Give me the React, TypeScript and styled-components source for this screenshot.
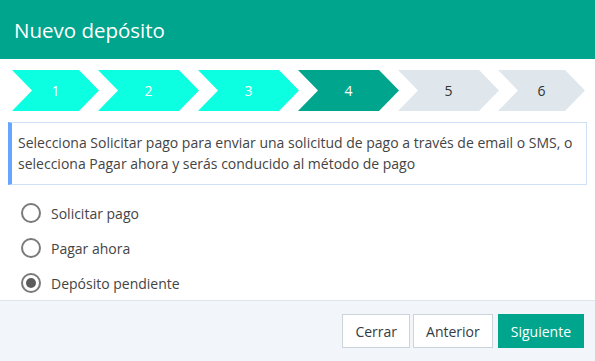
import React, { useState } from 'react';
import styled, { createGlobalStyle } from 'styled-components';

const GlobalStyle = createGlobalStyle`
    html, body {
        margin: 0;
        padding: 0;
        background: #ffffff;
    }
    body {
        font-family: 'Open Sans', 'Noto Sans', sans-serif;
        color: #444;
    }
    * {
        box-sizing: border-box;
    }
`;

const ModalBox = styled.div`
    width: 595px;
    height: 361px;
    display: flex;
    flex-direction: column;
    background: #fff;
`;

const ModalHeader = styled.div`
    height: 59px;
    background-color: #00a58e;
    display: flex;
    align-items: center;
    padding-left: 14px;

    h1 {
        margin: 0;
        font-size: 20.5px;
        font-weight: 400;
        color: #ffffff;
    }
`;

const ModalBody = styled.div`
    flex: 1;
    padding: 11px 8px 0 8px;
`;

const StepsRow = styled.div`
    display: flex;
    padding-left: 4px;
    height: 41px;
`;

type StepState = 'done' | 'active' | 'pending';

const StepItem = styled.div<{ $state: StepState; $w: number }>`
    width: ${p => p.$w}px;
    height: 41px;
    margin-left: -1px;
    display: flex;
    align-items: center;
    justify-content: center;
    font-size: 14px;
    clip-path: polygon(0 0, calc(100% - 20px) 0, 100% 50%, calc(100% - 20px) 100%, 0 100%, 20px 50%);
    background-color: ${p => (p.$state === 'done' ? '#0dffe1' : p.$state === 'active' ? '#00a58e' : '#dfe7ec')};
    color: ${p => (p.$state === 'pending' ? '#333' : '#fff')};

    &:first-child {
        margin-left: 0;
    }
`;

const InfoBox = styled.div`
    margin-top: 11px;
    width: 579px;
    border: 1px solid #cfe1f7;
    border-left: 4px solid #66a6ff;
    padding: 9px 10px 10px 6px;
    font-size: 14px;
    line-height: 21px;
    color: #444;
`;

const RadioList = styled.div`
    display: flex;
    flex-direction: column;
    padding: 18px 0 0 13px;
    gap: 15px;
`;

const RadioRow = styled.label`
    display: flex;
    align-items: center;
    gap: 10px;
    height: 20px;
    font-size: 14px;
    color: #444;
    cursor: pointer;
`;

const RadioCircle = styled.span<{ $checked: boolean }>`
    width: 20px;
    height: 20px;
    border-radius: 50%;
    border: 2px solid #7a7a7a;
    display: flex;
    align-items: center;
    justify-content: center;

    &::after {
        content: '';
        width: 10px;
        height: 10px;
        border-radius: 50%;
        background: ${p => (p.$checked ? '#5c5c5c' : 'transparent')};
    }
`;

const ModalFooter = styled.div`
    height: 61px;
    border-top: 1px solid #dde4ea;
    background-color: #f2f6fa;
    display: flex;
    justify-content: flex-end;
    align-items: center;
    gap: 3px;
    padding: 0 11px 0 0;
`;

const FooterButton = styled.button<{ $primary?: boolean }>`
    height: 34px;
    padding: 0 ${p => (p.$primary ? '12px' : '12px')};
    font-family: 'Open Sans', 'Noto Sans', sans-serif;
    font-size: 14px;
    border: 1px solid ${p => (p.$primary ? '#00a58e' : '#cbd3dc')};
    background-color: ${p => (p.$primary ? '#00a58e' : '#ffffff')};
    color: ${p => (p.$primary ? '#ffffff' : '#333a44')};
    border-radius: 0;
    cursor: pointer;
    margin-left: ${p => (p.$primary ? '2px' : '0')};
`;

const steps: { n: number; state: StepState; w: number }[] = [
    { n: 1, state: 'done', w: 87 },
    { n: 2, state: 'done', w: 101 },
    { n: 3, state: 'done', w: 101 },
    { n: 4, state: 'active', w: 101 },
    { n: 5, state: 'pending', w: 101 },
    { n: 6, state: 'pending', w: 87 },
];

const options = ['Solicitar pago', 'Pagar ahora', 'Depósito pendiente'];

const App = () => {
    const [selected, setSelected] = useState('Depósito pendiente');

    return (
        <>
            <GlobalStyle />
            <ModalBox>
                <ModalHeader>
                    <h1>Nuevo depósito</h1>
                </ModalHeader>
                <ModalBody>
                    <StepsRow>
                        {steps.map(s => (
                            <StepItem key={s.n} $state={s.state} $w={s.w}>
                                {s.n}
                            </StepItem>
                        ))}
                    </StepsRow>
                    <InfoBox>
                        Selecciona Solicitar pago para enviar una solicitud de pago a través de email o SMS, o selecciona Pagar ahora y serás
                        conducido al método de pago
                    </InfoBox>
                    <RadioList>
                        {options.map(o => (
                            <RadioRow key={o} onClick={() => setSelected(o)}>
                                <RadioCircle $checked={selected === o} />
                                {o}
                            </RadioRow>
                        ))}
                    </RadioList>
                </ModalBody>
                <ModalFooter>
                    <FooterButton>Cerrar</FooterButton>
                    <FooterButton>Anterior</FooterButton>
                    <FooterButton $primary>Siguiente</FooterButton>
                </ModalFooter>
            </ModalBox>
        </>
    );
};

export default App;
